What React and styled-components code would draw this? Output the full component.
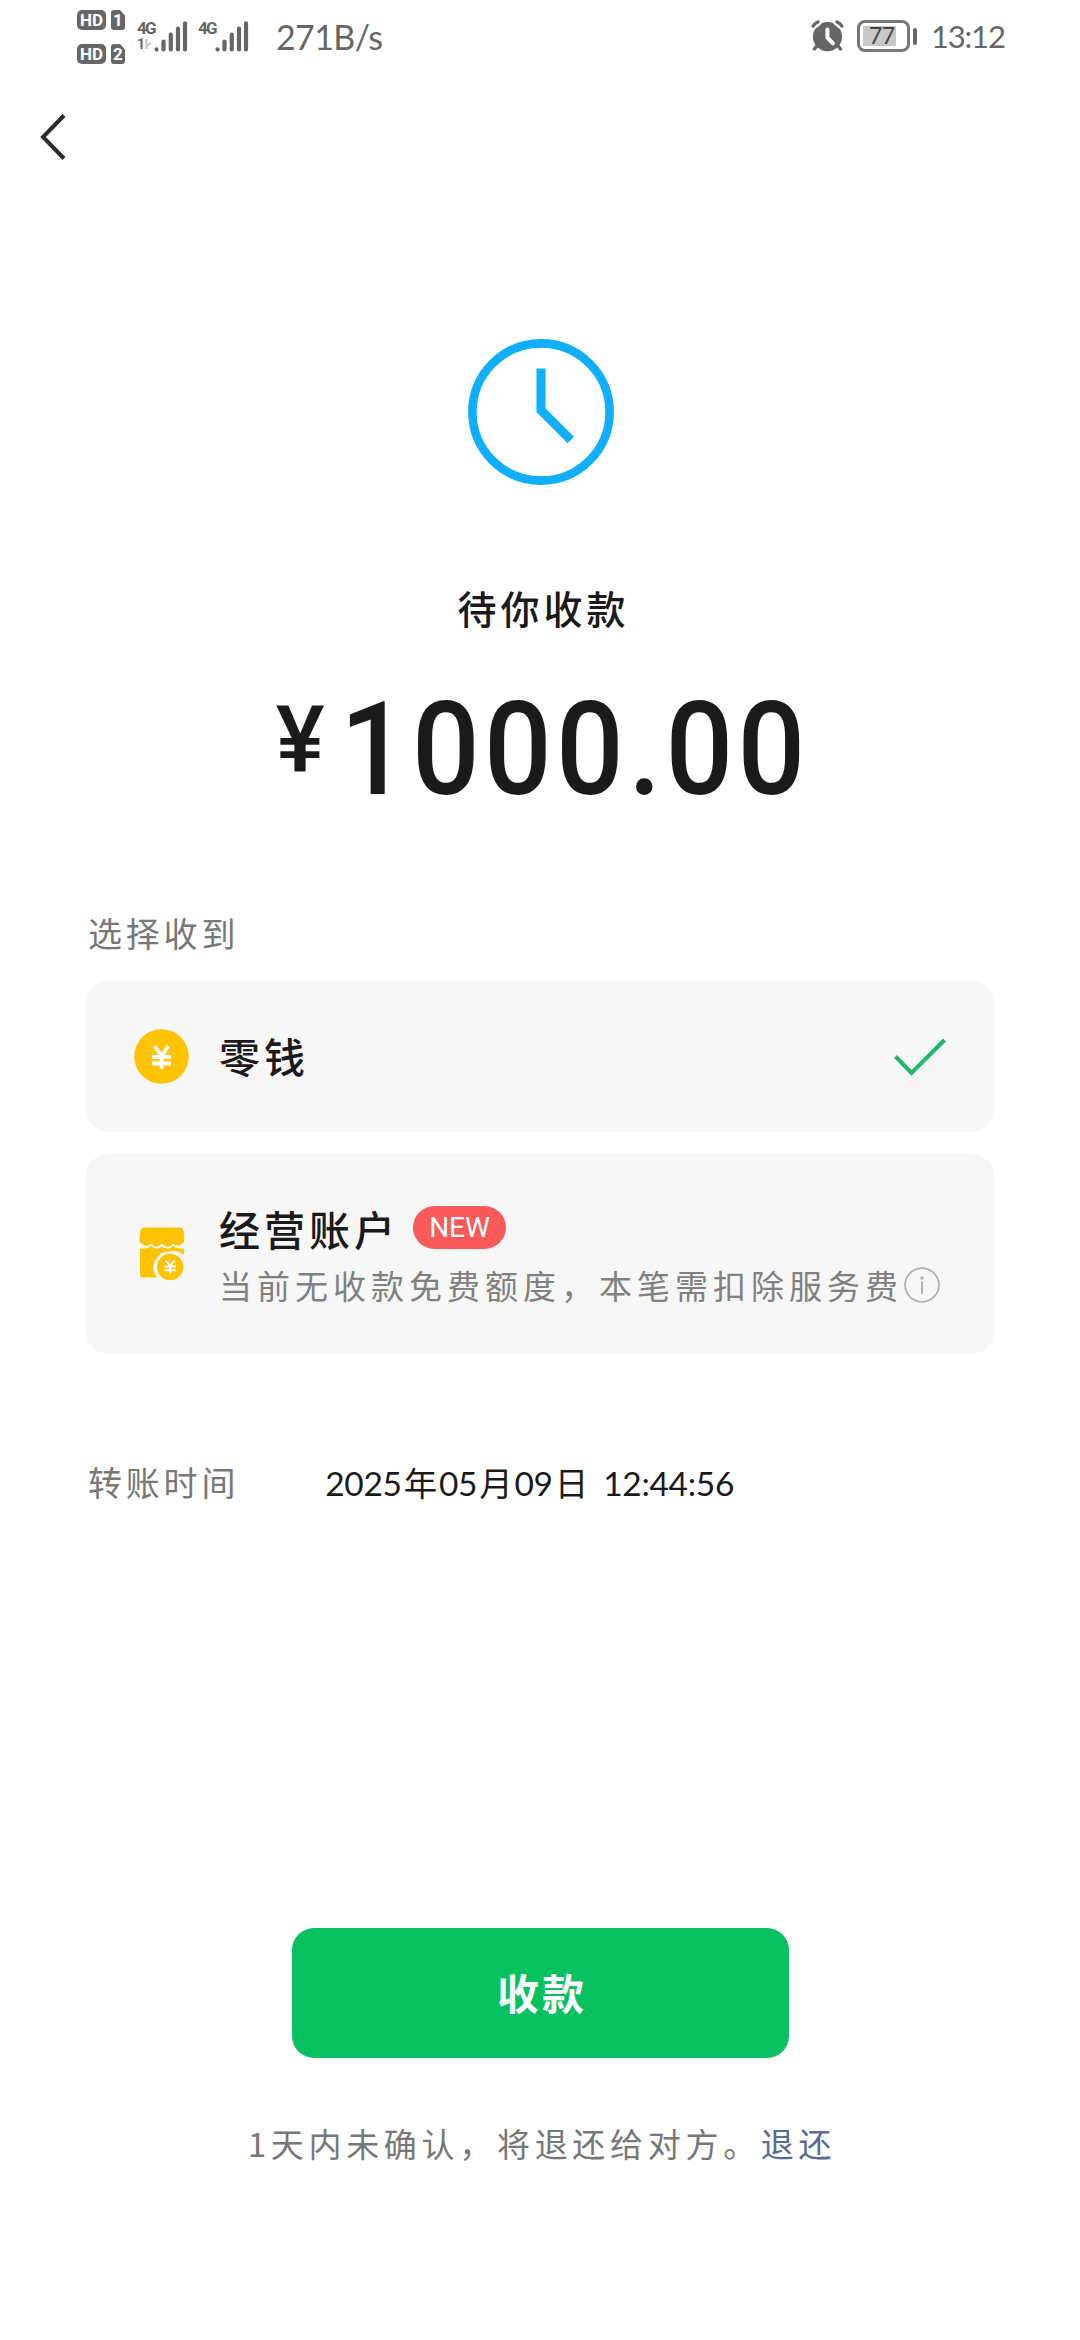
import styled, { createGlobalStyle, css } from 'styled-components';

const RECEIVE_OPTIONS = [
  { id: 'balance', name: '零钱', icon: 'coin', isSelected: true },
  {
    id: 'business',
    name: '经营账户',
    icon: 'store',
    isNew: true,
    notice: '当前无收款免费额度，本笔需扣除服务费',
  },
];

/** 状态栏 */
function StatusBar() {
  return (
    <StyledStatusBar>
      <StyledSimList>
        <HdBadge number={1} />
        <HdBadge number={2} />
      </StyledSimList>
      <Signal hasSubLabel />
      <StyledSecondSignal>
        <Signal />
      </StyledSecondSignal>
      <StyledSpeed>271B/s</StyledSpeed>
      <AlarmIcon />
      <StyledBattery>
        <StyledBatteryBody>
          <StyledBatteryLevel>77</StyledBatteryLevel>
        </StyledBatteryBody>
        <StyledBatteryTip />
      </StyledBattery>
      <StyledTime>13:12</StyledTime>
    </StyledStatusBar>
  );
}

function HdBadge({ number }) {
  return (
    <StyledHdRow>
      <StyledHd>HD</StyledHd>
      <StyledSim>{number}</StyledSim>
    </StyledHdRow>
  );
}

function Signal({ hasSubLabel = false }) {
  return (
    <StyledSignal>
      <StyledNetwork>
        <span>4G</span>
        {hasSubLabel && (
          <StyledSubLabel>
            1
            <svg width="7" height="10" viewBox="0 0 7 10">
              <path d="M1.5 0v10M1.5 7L5.5 4" stroke="#c4c4c4" strokeWidth="2" fill="none" />
            </svg>
          </StyledSubLabel>
        )}
      </StyledNetwork>
      <svg width="34" height="31" viewBox="0 0 34 31">
        <g stroke="#666" strokeWidth="4.2" strokeLinecap="round">
          <path d="M2.5 28.4v.2M9.5 20.5v8M16.8 13.5v15M24 7.5v21M31 2.3v26.2" />
        </g>
      </svg>
    </StyledSignal>
  );
}

function AlarmIcon() {
  return (
    <svg width="34" height="32" viewBox="0 0 34 32">
      <circle cx="16.5" cy="16.7" r="14.6" fill="#666" />
      <path
        d="M3.5 5.2L7.2 2M25.8 2L29.5 5.2"
        fill="none"
        stroke="#fff"
        strokeWidth="7"
        strokeLinecap="round"
      />
      <path
        d="M2.2 6Q4 3 7 2M26 2Q29 3 30.8 6M5.5 26.5L3.5 29M27.5 26.5L29.5 29"
        fill="none"
        stroke="#666"
        strokeWidth="3.4"
        strokeLinecap="round"
      />
      <path
        d="M16.4 9.5v8.2l5.6 5.6"
        fill="none"
        stroke="#fff"
        strokeWidth="4"
        strokeLinecap="round"
        strokeLinejoin="round"
      />
    </svg>
  );
}

function ClockIcon() {
  return (
    <svg width="146" height="146" viewBox="0 0 146 146">
      <g fill="none" stroke="#10aeff">
        <circle cx="73" cy="73" r="68.6" strokeWidth="8.6" />
        <path d="M73 29.5v41.7l29.8 29.8" strokeWidth="9" />
      </g>
    </svg>
  );
}

function CoinIcon() {
  return (
    <svg width="55" height="55" viewBox="0 0 55 55">
      <circle cx="27.5" cy="27.5" r="27.3" fill="#ffc300" />
      <path
        d="M20.5 17l7 10 7-10M27.5 26v14M18 28h19M18 34.5h19"
        fill="none"
        stroke="#fff"
        strokeWidth="3.8"
      />
    </svg>
  );
}

function StoreIcon() {
  return (
    <svg width="46" height="54" viewBox="0 0 46 54">
      <path
        d="M5 .5h36Q44 .5 44.6 4L45.5 12Q45.5 16 42 17.5Q38.5 20.5 34 16.5Q29 23 23 16.5Q17 23 12 16.5Q7.5 20.5 4 17.5Q.2 16 .3 12L1.3 4Q2 .5 5 .5z"
        fill="#ffc300"
      />
      <path
        d="M1 21.3Q7 23 12 19Q17 24 23 19.5Q29 24 34 19Q39 23 45 21.3V50.5H3Q1 50.5 1 48z"
        fill="#ffc300"
      />
      <path d="M31 24.5a16 16 0 0 0-13 26v3.5h28V29a16 16 0 0 0-15-4.5z" fill="#f7f7f7" />
      <circle cx="31.2" cy="40" r="13.2" fill="#ffc300" />
      <path
        d="M26.7 33.5l4.5 5.5 4.5-5.5M31.2 39v7.5M25.5 39.5h11.4M25.5 43.3h11.4"
        fill="none"
        stroke="#fff"
        strokeWidth="2"
      />
    </svg>
  );
}

function OptionCard({ option }) {
  const { name, icon, isSelected, isNew, notice } = option;

  return (
    <StyledOptionCard $isTall={Boolean(notice)}>
      <StyledOptionIcon>{icon === 'coin' ? <CoinIcon /> : <StoreIcon />}</StyledOptionIcon>
      <StyledOptionBody $isTall={Boolean(notice)}>
        <StyledOptionTitle>
          {name}
          {isNew && <StyledNewBadge>NEW</StyledNewBadge>}
        </StyledOptionTitle>
        {notice && (
          <StyledNotice>
            <span>{notice}</span>
            <svg width="36" height="36" viewBox="0 0 36 36">
              <circle cx="18" cy="18" r="16.9" fill="none" stroke="#b2b2b2" strokeWidth="1.8" />
              <circle cx="18" cy="11" r="1.8" fill="#b2b2b2" />
              <path d="M18 14.5v12.5" stroke="#b2b2b2" strokeWidth="2" />
            </svg>
          </StyledNotice>
        )}
      </StyledOptionBody>
      {isSelected && (
        <svg width="52" height="38" viewBox="0 0 52 38">
          <path d="M1.5 18.5L17.5 35L50.5 2" fill="none" stroke="#1db968" strokeWidth="4" />
        </svg>
      )}
    </StyledOptionCard>
  );
}

export default function App() {
  return (
    <StyledPage>
      <GlobalStyle />
      <StatusBar />
      <StyledNavBar>
        <svg width="28" height="48" viewBox="0 0 28 48">
          <path d="M24 2.5L3 24l21 21.5" fill="none" stroke="#2b2b2b" strokeWidth="4" />
        </svg>
      </StyledNavBar>
      <StyledSummary>
        <ClockIcon />
        <StyledStatusText>待你收款</StyledStatusText>
        <StyledAmount>
          <StyledCurrency>¥</StyledCurrency>
          <StyledDigits>1000.00</StyledDigits>
        </StyledAmount>
      </StyledSummary>
      <StyledSection>
        <StyledLabel>选择收到</StyledLabel>
        <StyledOptionList>
          {RECEIVE_OPTIONS.map((option) => (
            <OptionCard key={option.id} option={option} />
          ))}
        </StyledOptionList>
        <StyledDetailRow>
          <StyledLabel>转账时间</StyledLabel>
          <StyledDetailValue>
            2025<StyledHan>年</StyledHan>05<StyledHan>月</StyledHan>09<StyledHan>日</StyledHan>{' '}
            12:44:56
          </StyledDetailValue>
        </StyledDetailRow>
      </StyledSection>
      <StyledFooter>
        <StyledButton type="button">收款</StyledButton>
        <StyledHint>
          1天内未确认，将退还给对方。<StyledLink>退还</StyledLink>
        </StyledHint>
      </StyledFooter>
    </StyledPage>
  );
}

// styled-components

const GlobalStyle = createGlobalStyle`
  * {
    box-sizing: border-box;
  }

  body {
    margin: 0;
    background: #fff;
  }

  svg {
    display: block;
    flex-shrink: 0;
  }
`;

// CSS 片段
const cjkFont = css`
  font-family: 'Noto Sans CJK SC', sans-serif;
`;

const latinFont = css`
  font-family: Lato, 'Noto Sans CJK SC', sans-serif;
`;

const StyledPage = styled.div`
  display: flex;
  flex-direction: column;
  width: 1080px;
  height: 2340px;
  background: #fff;
  color: #1a1a1a;
  ${cjkFont};
`;

const StyledStatusBar = styled.header`
  display: flex;
  align-items: flex-start;
  height: 80px;
  padding: 0 75px 0 77px;
  color: #666;
  ${latinFont};

  > svg {
    margin: 20px 12px 0 auto;
  }
`;

const StyledSimList = styled.div`
  display: flex;
  flex-direction: column;
  gap: 14px;
  width: 48px;
  margin: 10px 12px 0 0;
`;

const StyledHdRow = styled.div`
  display: flex;
  gap: 5px;
  height: 20px;
  color: #fff;
  font: 700 17px/20px Roboto, sans-serif;
  text-align: center;
`;

const StyledHd = styled.span`
  width: 29px;
  border-radius: 5px;
  background: #666;
`;

const StyledSim = styled.span`
  width: 14px;
  border-radius: 3px;
  background: #666;
  clip-path: polygon(0 0, 65% 0, 100% 28%, 100% 100%, 0 100%);
`;

const StyledSignal = styled.div`
  display: flex;
  height: 31px;
  margin-top: 20.5px;
`;

const StyledSecondSignal = styled.div`
  margin-left: 10px;
`;

const StyledNetwork = styled.div`
  width: 17px;
  font: 700 17px/14px 'Liberation Sans Narrow', Roboto, sans-serif;
  letter-spacing: -1.7px;
  white-space: nowrap;
`;

const StyledSubLabel = styled.div`
  display: flex;
  align-items: center;
  gap: 2px;
  height: 18px;
  font-size: 14px;
`;

const StyledSpeed = styled.span`
  margin: 16px 0 0 27px;
  font-size: 34px;
  line-height: 42px;
  letter-spacing: -0.6px;
`;

const StyledBattery = styled.div`
  display: flex;
  align-items: center;
  gap: 3px;
  margin: 20px 14px 0 0;
`;

const StyledBatteryBody = styled.div`
  width: 53px;
  height: 32px;
  padding: 3px;
  border: 3.5px solid #777;
  border-radius: 8px;
`;

const StyledBatteryLevel = styled.div`
  width: 33px;
  height: 20px;
  padding-left: 6px;
  background: #c8c8c8;
  color: #444;
  font-size: 23px;
  line-height: 19px;
  letter-spacing: -0.5px;
`;

const StyledBatteryTip = styled.div`
  width: 4px;
  height: 17px;
  border-radius: 2px;
  background: #666;
`;

const StyledTime = styled.span`
  width: 74px;
  margin-top: 16px;
  font-size: 31px;
  line-height: 41px;
  letter-spacing: -1.2px;
  white-space: nowrap;
`;

const StyledNavBar = styled.nav`
  height: 120px;
  padding: 33px 40px;
`;

const StyledSummary = styled.section`
  display: flex;
  flex-direction: column;
  align-items: center;
  height: 696px;
  padding: 139px 0 0 1px;
`;

const StyledStatusText = styled.p`
  margin: 94px 0 0 6px;
  font-size: 39px;
  font-weight: 500;
  line-height: 56px;
  letter-spacing: 4px;
`;

const StyledAmount = styled.p`
  display: flex;
  align-items: flex-start;
  margin: 35px 0 0 12px;
  font: 500 129.5px/160px Roboto, sans-serif;
`;

const StyledCurrency = styled.span`
  margin-right: 15px;
  font-size: 92px;
  line-height: 142px;
`;

// 数字收窄，同时用字距保持原有步进
const StyledDigits = styled.span`
  margin-right: -33px;
  letter-spacing: 4.7px;
  transform: scaleX(0.92);
  transform-origin: left;
`;

const StyledSection = styled.section`
  display: flex;
  flex-direction: column;
  padding: 0 86px;
`;

const StyledLabel = styled.span`
  padding-left: 2px;
  color: #777;
  font-size: 34px;
  line-height: 74px;
  letter-spacing: 3.8px;
`;

const StyledOptionList = styled.div`
  display: flex;
  flex-direction: column;
  gap: 22px;
  margin-top: 11px;
`;

const StyledOptionCard = styled.div`
  display: flex;
  align-items: center;
  height: ${({ $isTall }) => ($isTall ? '200px' : '151px')};
  padding: 0 48px;
  border-radius: 22px;
  background: #f7f7f7;
`;

const StyledOptionIcon = styled.div`
  display: flex;
  justify-content: center;
  width: 55px;
  margin-right: 30px;
`;

const StyledOptionBody = styled.div`
  flex: 1;
  padding: ${({ $isTall }) => ($isTall ? '5px 0 0' : '0 0 4px')};
`;

const StyledOptionTitle = styled.div`
  display: flex;
  align-items: center;
  font-size: 41px;
  font-weight: 500;
  line-height: 52px;
  letter-spacing: 4px;
`;

const StyledNewBadge = styled.span`
  width: 93px;
  height: 43px;
  margin-left: 14px;
  border-radius: 22px;
  background: #fa5a5a;
  color: #fff;
  font: 400 28px/43px Roboto, sans-serif;
  letter-spacing: 0;
  text-align: center;
`;

const StyledNotice = styled.div`
  display: flex;
  align-items: center;
  margin-top: 4px;
  color: #808080;
  font-size: 33px;
  line-height: 54px;
  letter-spacing: 5px;
  white-space: nowrap;

  svg {
    margin-left: 1px;
  }
`;

const StyledDetailRow = styled.div`
  display: flex;
  align-items: center;
  height: 74px;
  margin-top: 91px;
`;

const StyledDetailValue = styled.span`
  margin: -2px 0 0 86px;
  font-size: 33.5px;
  white-space: nowrap;
  word-spacing: 5px;
  letter-spacing: -0.3px;
  ${latinFont};
`;

const StyledHan = styled.span`
  margin: 0 2px;
`;

const StyledFooter = styled.footer`
  display: flex;
  flex-direction: column;
  align-items: center;
  margin-top: 409px;
`;

const StyledButton = styled.button`
  width: 497px;
  height: 130px;
  padding: 0 0 3px 4px;
  border: none;
  border-radius: 22px;
  background: #07c160;
  color: #fff;
  font-size: 42px;
  font-weight: 700;
  letter-spacing: 3px;
  ${cjkFont};
`;

const StyledHint = styled.p`
  margin: 59px 0 0 4px;
  color: #777;
  font-size: 33px;
  line-height: 52px;
  letter-spacing: 4.7px;
`;

const StyledLink = styled.a`
  color: #576b95;
`;
